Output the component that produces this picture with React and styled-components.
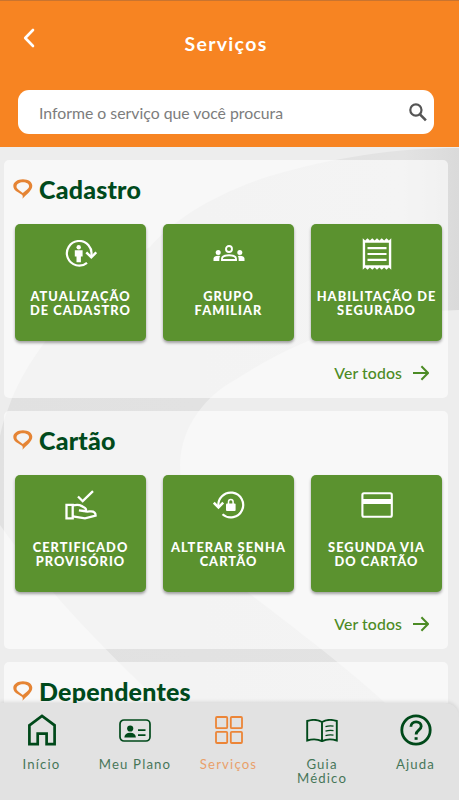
import React from "react";
import styled, { createGlobalStyle } from "styled-components";

const sections = [
  {
    title: "Cadastro",
    tiles: [
      { icon: <UpdateIcon />, label: "ATUALIZAÇÃO\nDE CADASTRO" },
      { icon: <GroupIcon />, label: "GRUPO\nFAMILIAR" },
      { icon: <ReceiptIcon />, label: "HABILITAÇÃO DE\nSEGURADO" },
    ],
  },
  {
    title: "Cartão",
    tiles: [
      { icon: <HandIcon />, label: "CERTIFICADO\nPROVISÓRIO" },
      { icon: <LockIcon />, label: "ALTERAR SENHA\nCARTÃO" },
      { icon: <CardIcon />, label: "SEGUNDA VIA\nDO CARTÃO" },
    ],
  },
  { title: "Dependentes", tiles: [] },
];

const menu = [
  { icon: <HomeIcon />, label: "Início" },
  { icon: <PlanIcon />, label: "Meu Plano" },
  { icon: <GridIcon />, label: "Serviços", active: true },
  { icon: <BookIcon />, label: "Guia\nMédico" },
  { icon: <HelpIcon />, label: "Ajuda" },
];

function BackIcon() {
  return (
    <svg width="12" height="20" viewBox="0 0 12 20" fill="none">
      <path d="M10 2 2.2 10 10 18" stroke="#fff" strokeWidth="2.6" strokeLinecap="round" strokeLinejoin="round" />
    </svg>
  );
}

function SearchIcon() {
  return (
    <svg width="18" height="19" viewBox="0 0 18 19" fill="none" stroke="#555" strokeWidth="2.2">
      <circle cx="6.9" cy="7" r="5.6" />
      <path d="m11 11.3 5.9 6.1" strokeWidth="2.6" />
    </svg>
  );
}

function BrandMark() {
  return (
    <svg width="20" height="20" viewBox="0 0 20 20" fill="#e58434">
      <path
        fillRule="evenodd"
        d="M5 13.200C1.900 11.700.3 9.500.3 7 .3 3.200 4.500.3 9.900.3s9.400 2.800 9.400 6.500c0 4.600-5.200 8.200-9.900 12.900.6-1.700.6-2.900-.5-3.900zM9.800 14l4-3.300c1.600-1.300 2.300-2.200 2.300-3.400 0-2.400-2.600-4-6.100-4-3.600 0-6.500 1.800-6.500 4.300 0 1.300.7 2.200 2.300 3.300z"
      />
    </svg>
  );
}

function ArrowIcon() {
  return (
    <svg width="16" height="16" viewBox="0 0 16 16" fill="none" stroke="#4c8b25" strokeWidth="2">
      <path d="M0 8h15M8.400 1.200 15 8l-6.600 6.800" />
    </svg>
  );
}

function UpdateIcon() {
  return (
    <svg width="32" height="28" viewBox="0 0 32 28" fill="none" stroke="#fff" strokeWidth="2.200">
      <path d="M22 22.800A12.300 12.300 0 1 1 26.200 16" />
      <path d="m21.300 12.300 5 5 5-5" strokeWidth="2.500" />
      <circle cx="13.700" cy="7.200" r="2.200" fill="#fff" stroke="none" />
      <path d="M9.800 10.300h7.800v6.300h-1.700v5.700h-4.400v-5.700H9.800z" fill="#fff" stroke="none" />
    </svg>
  );
}

function GroupIcon() {
  return (
    <svg width="32" height="17" viewBox="0 0 32 17" fill="none" stroke="#fff" strokeWidth="1.900">
      <circle cx="16" cy="4" r="3" />
      <path d="M9 15v-1.200C9 11.500 12 10.200 16 10.200s7 1.300 7 3.600V15z" />
      <g fill="#fff" stroke="none">
        <circle cx="5.200" cy="7.400" r="2.500" />
        <circle cx="26.800" cy="7.400" r="2.500" />
        <path d="M.5 16v-2.400c0-1.700 2-2.900 4.700-2.900l2 .2C6.500 12 6.300 13 6.300 16z" />
        <path d="M31.500 16v-2.400c0-1.700-2-2.900-4.700-2.900l-2 .2c.7 1.100.9 2.100.9 5.100z" />
      </g>
    </svg>
  );
}

function ReceiptIcon() {
  return (
    <svg width="38" height="38" viewBox="0 0 24 24" fill="#fff">
      <path d="M19.500 3.500 18 2l-1.500 1.500L15 2l-1.500 1.500L12 2l-1.500 1.500L9 2 7.500 3.500 6 2 4.500 3.500 3 2v20l1.500-1.500L6 22l1.500-1.500L9 22l1.500-1.500L12 22l1.500-1.500L15 22l1.500-1.500L18 22l1.500-1.500L21 22V2zm0 15.600h-15V4.900h15zM6 15h12v1.400H6zm0-3.700h12v1.400H6zm0-3.700h12V9H6z" />
    </svg>
  );
}

function HandIcon() {
  return (
    <svg width="32" height="30" viewBox="0 0 32 30" fill="none" stroke="#fff" strokeWidth="2.300">
      <path d="m13 6.500 4.700 4.700L28 1.200" />
      <path d="M1.500 14.800h6.200v13.500H1.500z" />
      <path d="M7.700 15.300c6.300-1.300 8.100-.2 12.200 2.600 1.800 1.300 1.300 3.200-1 3.100l-5-.6M18.500 21c3.500 1.100 5.100.4 7.500.3 2.500 0 4.600 1.300 4.600 4.400L20 28.400 7.700 26.300" />
    </svg>
  );
}

function LockIcon() {
  return (
    <svg width="32" height="28" viewBox="0 0 32 28" fill="none" stroke="#fff" strokeWidth="2.200">
      <path d="M5.500 15.800A12.400 12.400 0 1 1 9.500 23.200" />
      <path d="m.8 11.700 4.700 4.700 4.700-4.700" strokeWidth="2.500" />
      <path d="M15.500 13.200v-2.400a2.300 2.300 0 0 1 4.600 0v2.400" strokeWidth="1.500" />
      <rect x="13" y="12.500" width="9.600" height="7.600" rx="1" fill="#fff" stroke="none" />
    </svg>
  );
}

function CardIcon() {
  return (
    <svg width="32" height="26" viewBox="0 0 32 26" fill="none" stroke="#fff" strokeWidth="2.100">
      <rect x="1.400" y="1.300" width="29.400" height="23.400" rx="1.500" />
      <path d="M1 9.500h30" strokeWidth="5" />
    </svg>
  );
}

function HomeIcon() {
  return (
    <svg width="28" height="32" viewBox="0 0 28 32" fill="none" stroke="currentColor" strokeWidth="2.700">
      <path d="M1.400 11.300 14 1.900l12.600 9.400v18.900h-8V19.600H9.700v10.600H1.400z" />
    </svg>
  );
}

function PlanIcon() {
  return (
    <svg width="32" height="23" viewBox="0 0 32 23" fill="none" stroke="currentColor" strokeWidth="1.700">
      <rect x="1" y="1" width="30" height="21" rx="4" />
      <circle cx="11.200" cy="9.500" r="3.100" fill="currentColor" stroke="none" />
      <path d="M5.300 18.400c.2-3.100 2.300-4.700 5.900-4.700s5.500 1.600 5.700 4.700z" fill="currentColor" stroke="none" />
      <path d="M19 11.200h7.500M19 16.200h7.500" />
    </svg>
  );
}

function GridIcon() {
  return (
    <svg width="28" height="28" viewBox="0 0 28 28" fill="none" stroke="currentColor" strokeWidth="1.800">
      <rect x="1" y="1" width="11.200" height="11.200" rx="1" />
      <rect x="15.800" y="1" width="11.200" height="11.200" rx="1" />
      <rect x="1" y="15.800" width="11.200" height="11.200" rx="1" />
      <rect x="15.800" y="15.800" width="11.200" height="11.200" rx="1" />
    </svg>
  );
}

function BookIcon() {
  return (
    <svg width="32" height="23" viewBox="0 0 32 23" fill="none" stroke="currentColor" strokeWidth="1.900">
      <path d="M16 3C12 .7 6 .5 1.200 2v19.500c4.800-1.500 10.800-1.300 14.800.7 4-2 10-2.200 14.800-.7V2C26 .5 20 .7 16 3zM16 3v19" />
      <path d="M19.500 7.600c2.500-.8 5.500-.9 8-.5M19.500 12.100c2.500-.8 5.500-.9 8-.5M19.500 16.600c2.500-.8 5.500-.9 8-.5" strokeWidth="1.400" />
    </svg>
  );
}

function HelpIcon() {
  return (
    <svg width="32" height="32" viewBox="0 0 32 32" fill="none" stroke="currentColor" strokeWidth="2.800">
      <circle cx="16" cy="16" r="14.200" />
      <path d="M10.900 12.800c0-3 2.100-4.900 5.200-4.900 3 0 5.100 1.700 5.100 4.400 0 3.800-5.100 4-5.100 8.200" />
      <path d="M14.600 23.200h3v2.600h-3z" fill="currentColor" stroke="none" />
    </svg>
  );
}

function Watermark() {
  return (
    <WatermarkSvg viewBox="0 147 459 653" preserveAspectRatio="none">
      <defs>
        <linearGradient id="ring" x1="0" x2="1" y1="0" y2="0">
          <stop offset="0" stopColor="#e1e1e1" />
          <stop offset=".88" stopColor="#e3e3e3" />
          <stop offset="1" stopColor="#dadada" />
        </linearGradient>
      </defs>
      <path
        fill="url(#ring)"
        d="M459 148C395 148 330 158 270 176C215 193 170 222 150 247C95 278 30 345 8 409C-5 440-8 490 0 525C35 575 85 630 140 683L160 703H385C350 670 290 625 250 594C205 560 180 515 180 465C181 425 207 395 235 380C290 344 360 313 459 310Z"
      />
    </WatermarkSvg>
  );
}

function Section({ title, tiles }) {
  return (
    <Panel>
      <SectionHead>
        <BrandMark />
        <SectionTitle>{title}</SectionTitle>
      </SectionHead>
      {tiles.length > 0 && (
        <>
          <TileRow>
            {tiles.map(({ icon, label }) => (
              <Tile key={label}>
                <TileIcon>{icon}</TileIcon>
                <TileText>{label}</TileText>
              </Tile>
            ))}
          </TileRow>
          <SeeAll>
            <SeeAllText>Ver todos</SeeAllText>
            <ArrowIcon />
          </SeeAll>
        </>
      )}
    </Panel>
  );
}

function App() {
  return (
    <Screen>
      <GlobalStyle />
      <Header>
        <TitleBar>
          <BackButton aria-label="Voltar">
            <BackIcon />
          </BackButton>
          <PageTitle>Serviços</PageTitle>
          <span />
        </TitleBar>
        <SearchBox>
          <SearchInput type="text" placeholder="Informe o serviço que você procura" />
          <SearchIcon />
        </SearchBox>
      </Header>
      <Content>
        <Watermark />
        {sections.map((section) => (
          <Section key={section.title} {...section} />
        ))}
      </Content>
      <BottomNav>
        {menu.map(({ icon, label, active }) => (
          <NavItem key={label} $active={active}>
            <NavIcon>{icon}</NavIcon>
            <NavText>{label}</NavText>
          </NavItem>
        ))}
      </BottomNav>
    </Screen>
  );
}

const GlobalStyle = createGlobalStyle`
  * {
    box-sizing: border-box;
  }
  body {
    margin: 0;
    font-family: Lato, "Open Sans", sans-serif;
  }
  svg {
    display: block;
    flex-shrink: 0;
  }
`;

const Screen = styled.div`
  display: flex;
  flex-direction: column;
  width: 459px;
  height: 800px;
  overflow: hidden;
  background: #ededed;
`;

const Header = styled.header`
  display: flex;
  flex-direction: column;
  flex-shrink: 0;
  height: 147px;
  padding: 0 25px 0 18px;
  background: #f78422;
  border-top: 1px solid #c9742f;
`;

const TitleBar = styled.div`
  display: grid;
  grid-template-columns: 60px 1fr 60px;
  height: 89px;
`;

const BackButton = styled.button`
  display: flex;
  align-self: start;
  margin-top: 27px;
  padding: 0 0 0 5px;
  border: 0;
  background: none;
`;

const PageTitle = styled.h1`
  margin: 28px 0 0;
  font-size: 19.5px;
  line-height: 30px;
  font-weight: 700;
  letter-spacing: 1.3px;
  text-align: center;
  color: #fff;
`;

const SearchBox = styled.label`
  display: flex;
  align-items: center;
  height: 44px;
  padding: 0 7px 0 21px;
  border-radius: 11px;
  background: #fff;
`;

const SearchInput = styled.input`
  flex: 1;
  min-width: 0;
  padding: 0;
  border: 0;
  outline: none;
  background: none;
  font: inherit;
  font-size: 15.8px;
  &::placeholder {
    color: #7c7c7c;
  }
`;

const Content = styled.main`
  position: relative;
  display: flex;
  flex-direction: column;
  flex: 1;
  gap: 13px;
  min-height: 0;
  padding: 13px 11px 0 4px;
  overflow: hidden;
`;

const WatermarkSvg = styled.svg`
  position: absolute;
  top: 0;
  left: 0;
  width: 459px;
  height: 653px;
`;

const Panel = styled.section`
  position: relative;
  flex-shrink: 0;
  height: 238px;
  padding: 13px 6px 0 11px;
  border-radius: 5px;
  background: rgba(255, 255, 255, 0.6);
`;

const SectionHead = styled.div`
  display: flex;
  align-items: center;
  gap: 6px;
  height: 32px;
  margin-left: -2px;
`;

const SectionTitle = styled.h2`
  margin: 0;
  font-size: 25px;
  line-height: 32px;
  font-weight: 900;
  letter-spacing: 0.2px;
  color: #004a1c;
`;

const TileRow = styled.div`
  display: grid;
  grid-template-columns: repeat(3, 131px);
  gap: 17px;
  margin-top: 19px;
`;

const Tile = styled.div`
  display: flex;
  flex-direction: column;
  align-items: center;
  height: 117px;
  border-radius: 5px;
  background: #5b922f;
  box-shadow: 0 2px 3px rgba(0, 0, 0, 0.35);
`;

const TileIcon = styled.div`
  display: flex;
  align-items: center;
  justify-content: center;
  height: 59px;
  margin-bottom: 6px;
`;

const TileText = styled.span`
  font-size: 12.8px;
  line-height: 14.4px;
  font-weight: 900;
  letter-spacing: 1.05px;
  text-align: center;
  white-space: pre;
  color: #fff;
`;

const SeeAll = styled.div`
  display: flex;
  align-items: center;
  justify-content: flex-end;
  gap: 11px;
  margin: 20px 13px 0 0;
`;

const SeeAllText = styled.span`
  font-size: 15.8px;
  line-height: 24px;
  font-weight: 500;
  letter-spacing: 0.1px;
  color: #4c8b25;
`;

const BottomNav = styled.nav`
  position: relative;
  display: grid;
  grid-template-columns: repeat(5, 93.5px);
  justify-content: center;
  flex-shrink: 0;
  height: 97px;
  padding-right: 2px;
  background: #e2e2e2;
  border-radius: 0 14px 0 0;
  box-shadow: 0 -1px 4px rgba(0, 0, 0, 0.12);
`;

const NavItem = styled.div`
  display: flex;
  flex-direction: column;
  align-items: center;
  color: ${(props) => (props.$active ? "#ec8537" : "#00491a")};
`;

const NavIcon = styled.div`
  display: flex;
  align-items: center;
  height: 54px;
`;

const NavText = styled.span`
  font-size: 13.2px;
  line-height: 14px;
  letter-spacing: 1.15px;
  text-align: center;
  white-space: pre;
  opacity: 0.7;
`;

export default App;
